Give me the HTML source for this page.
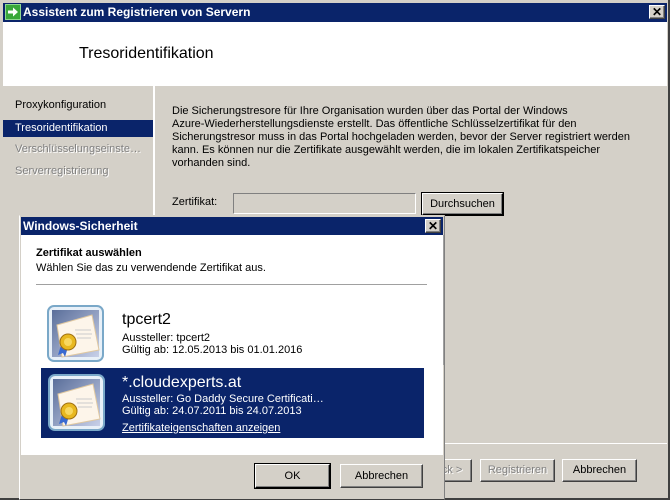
<!DOCTYPE html>
<html><head><meta charset="utf-8"><style>
*{margin:0;padding:0;box-sizing:border-box}
body{width:670px;height:500px;overflow:hidden;background:#d4d0c8;font-family:"Liberation Sans",Tahoma,sans-serif;font-size:11px;color:#000;position:relative}
.a{position:absolute;white-space:nowrap}
.btn{position:absolute;background:#d4d0c8;border:1px solid;border-color:#fff #404040 #404040 #fff;box-shadow:inset -1px -1px 0 #808080;text-align:center;font-size:11px}
.dis{color:#808080;text-shadow:1px 1px 0 #fff}
</style></head><body>
<!-- main window -->
<div class="a" style="left:0;top:0;width:670px;height:500px;background:#d4d0c8;border-right:2px solid #404040;border-bottom:2px solid #404040"></div>
<div class="a" style="left:3px;top:3px;width:664px;height:19px;background:#0a246a"></div>
<div class="a" style="left:5px;top:4px;width:16px;height:16px;background:#3aa83a;border:1px solid #8fd88f"></div>
<svg class="a" style="left:7px;top:7px" width="12" height="10" viewBox="0 0 12 10"><path d="M1 3.5h5V0.5L11 5 6 9.5V6.5H1z" fill="#fff"/></svg>
<div class="a" style="left:23px;top:4px;color:#fff;font-weight:bold;font-size:12px;line-height:16px">Assistent zum Registrieren von Servern</div>
<div class="btn" style="left:649px;top:5px;width:16px;height:14px;font-size:12px;line-height:12px;font-weight:bold">✕</div>
<div class="a" style="left:3px;top:22px;width:664px;height:64px;background:#fff"></div>
<div class="a" style="left:79px;top:44px;font-size:16px;line-height:20px">Tresoridentifikation</div>
<div class="a" style="left:153px;top:86px;width:2px;height:414px;background:#fff"></div>
<div class="a" style="left:15px;top:98px;line-height:14px">Proxykonfiguration</div>
<div class="a" style="left:3px;top:120px;width:150px;height:17px;background:#0a246a"></div>
<div class="a" style="left:15px;top:121px;line-height:14px;color:#fff">Tresoridentifikation</div>
<div class="a dis" style="left:15px;top:142px;line-height:14px">Verschlüsselungseinste…</div>
<div class="a dis" style="left:15px;top:164px;line-height:14px">Serverregistrierung</div>
<div class="a" style="left:172px;top:105px;line-height:13px">Die Sicherungstresore für Ihre Organisation wurden über das Portal der Windows<br>Azure-Wiederherstellungsdienste erstellt. Das öffentliche Schlüsselzertifikat für den<br>Sicherungstresor muss in das Portal hochgeladen werden, bevor der Server registriert werden<br>kann. Es können nur die Zertifikate ausgewählt werden, die im lokalen Zertifikatspeicher<br>vorhanden sind.</div>
<div class="a" style="left:172px;top:196px;line-height:13px">Zertifikat:</div>
<div class="a" style="left:233px;top:193px;width:183px;height:21px;border:1px solid;border-color:#808080 #fff #fff #808080;background:#d4d0c8"></div>
<div class="btn" style="left:422px;top:193px;width:81px;height:22px;line-height:20px;border-color:#fff #000 #000 #fff;outline:1px solid #000">Durchsuchen</div>
<div class="a" style="left:155px;top:443px;width:512px;height:1px;background:#fff"></div>
<div class="btn dis" style="left:400px;top:459px;width:72px;height:23px;line-height:21px">&lt; Zurück &gt;</div>
<div class="btn dis" style="left:480px;top:459px;width:75px;height:23px;line-height:21px">Registrieren</div>
<div class="btn" style="left:562px;top:459px;width:75px;height:23px;line-height:21px">Abbrechen</div>
<!-- dialog -->
<div class="a" style="left:19px;top:215px;width:426px;height:285px;background:#d4d0c8;border:1px solid;border-color:#d4d0c8 #808080 #404040 #fff"></div>
<div class="a" style="left:21px;top:217px;width:422px;height:18px;background:#0a246a"></div>
<div class="a" style="left:23px;top:218px;color:#fff;font-weight:bold;font-size:12px;line-height:16px">Windows-Sicherheit</div>
<div class="btn" style="left:425px;top:219px;width:16px;height:14px;font-size:12px;line-height:12px;font-weight:bold">✕</div>
<div class="a" style="left:21px;top:235px;width:422px;height:220px;background:#fff"></div>
<div class="a" style="left:443px;top:235px;width:1px;height:130px;background:#a0a0a0"></div>
<div class="a" style="left:36px;top:246px;font-weight:bold;line-height:14px">Zertifikat auswählen</div>
<div class="a" style="left:36px;top:261px;line-height:14px">Wählen Sie das zu verwendende Zertifikat aus.</div>
<div class="a" style="left:36px;top:284px;width:391px;height:1px;background:#a0a0a0"></div>
<svg class="a" style="left:47px;top:305px" width="57" height="57" viewBox="0 0 57 57"><defs><linearGradient id="g" x1="0" y1="0" x2="1" y2="1"><stop offset="0" stop-color="#5a6e9a"/><stop offset="1" stop-color="#c8d0e8"/></linearGradient></defs>
<rect x="1" y="1" width="55" height="55" rx="6" fill="#e8f0f8" stroke="#7aa8c8" stroke-width="2"/><rect x="5" y="5" width="47" height="47" fill="url(#g)"/><path d="M10 20 L45 10 L52 45 L15 52z" fill="#fdf5ea" stroke="#e0c8a0"/><path d="M28 25h16M29 29h16M30 33h14" stroke="#ccc"/><path d="M14 40l-3 10 5-2 2 4 3-10z" fill="#3a6ad0"/><circle cx="21" cy="37" r="8" fill="#e8b820" stroke="#a07010"/><circle cx="21" cy="37" r="4" fill="#f8d860"/></svg>
<div class="a" style="left:122px;top:310px;font-size:16px;line-height:20px">tpcert2</div>
<div class="a" style="left:122px;top:331px;line-height:14px">Aussteller: tpcert2</div>
<div class="a" style="left:122px;top:343px;line-height:14px">Gültig ab: 12.05.2013 bis 01.01.2016</div>
<div class="a" style="left:41px;top:368px;width:383px;height:70px;background:#0a246a"></div>
<svg class="a" style="left:48px;top:374px" width="57" height="57" viewBox="0 0 57 57"><rect x="1" y="1" width="55" height="55" rx="6" fill="#e8f0f8" stroke="#7aa8c8" stroke-width="2"/><rect x="5" y="5" width="47" height="47" fill="url(#g)"/><path d="M10 20 L45 10 L52 45 L15 52z" fill="#fdf5ea" stroke="#e0c8a0"/><path d="M28 25h16M29 29h16M30 33h14" stroke="#ccc"/><path d="M14 40l-3 10 5-2 2 4 3-10z" fill="#3a6ad0"/><circle cx="21" cy="37" r="8" fill="#e8b820" stroke="#a07010"/><circle cx="21" cy="37" r="4" fill="#f8d860"/></svg>
<div class="a" style="left:122px;top:373px;font-size:16px;line-height:20px;color:#fff">*.cloudexperts.at</div>
<div class="a" style="left:122px;top:392px;line-height:14px;color:#fff">Aussteller: Go Daddy Secure Certificati…</div>
<div class="a" style="left:122px;top:404px;line-height:14px;color:#fff">Gültig ab: 24.07.2011 bis 24.07.2013</div>
<div class="a" style="left:122px;top:421px;line-height:14px;color:#fff;text-decoration:underline">Zertifikateigenschaften anzeigen</div>
<div class="btn" style="left:255px;top:464px;width:75px;height:24px;line-height:22px;border-color:#fff #000 #000 #fff;outline:1px solid #000">OK</div>
<div class="btn" style="left:340px;top:464px;width:83px;height:24px;line-height:22px">Abbrechen</div>
</body></html>
